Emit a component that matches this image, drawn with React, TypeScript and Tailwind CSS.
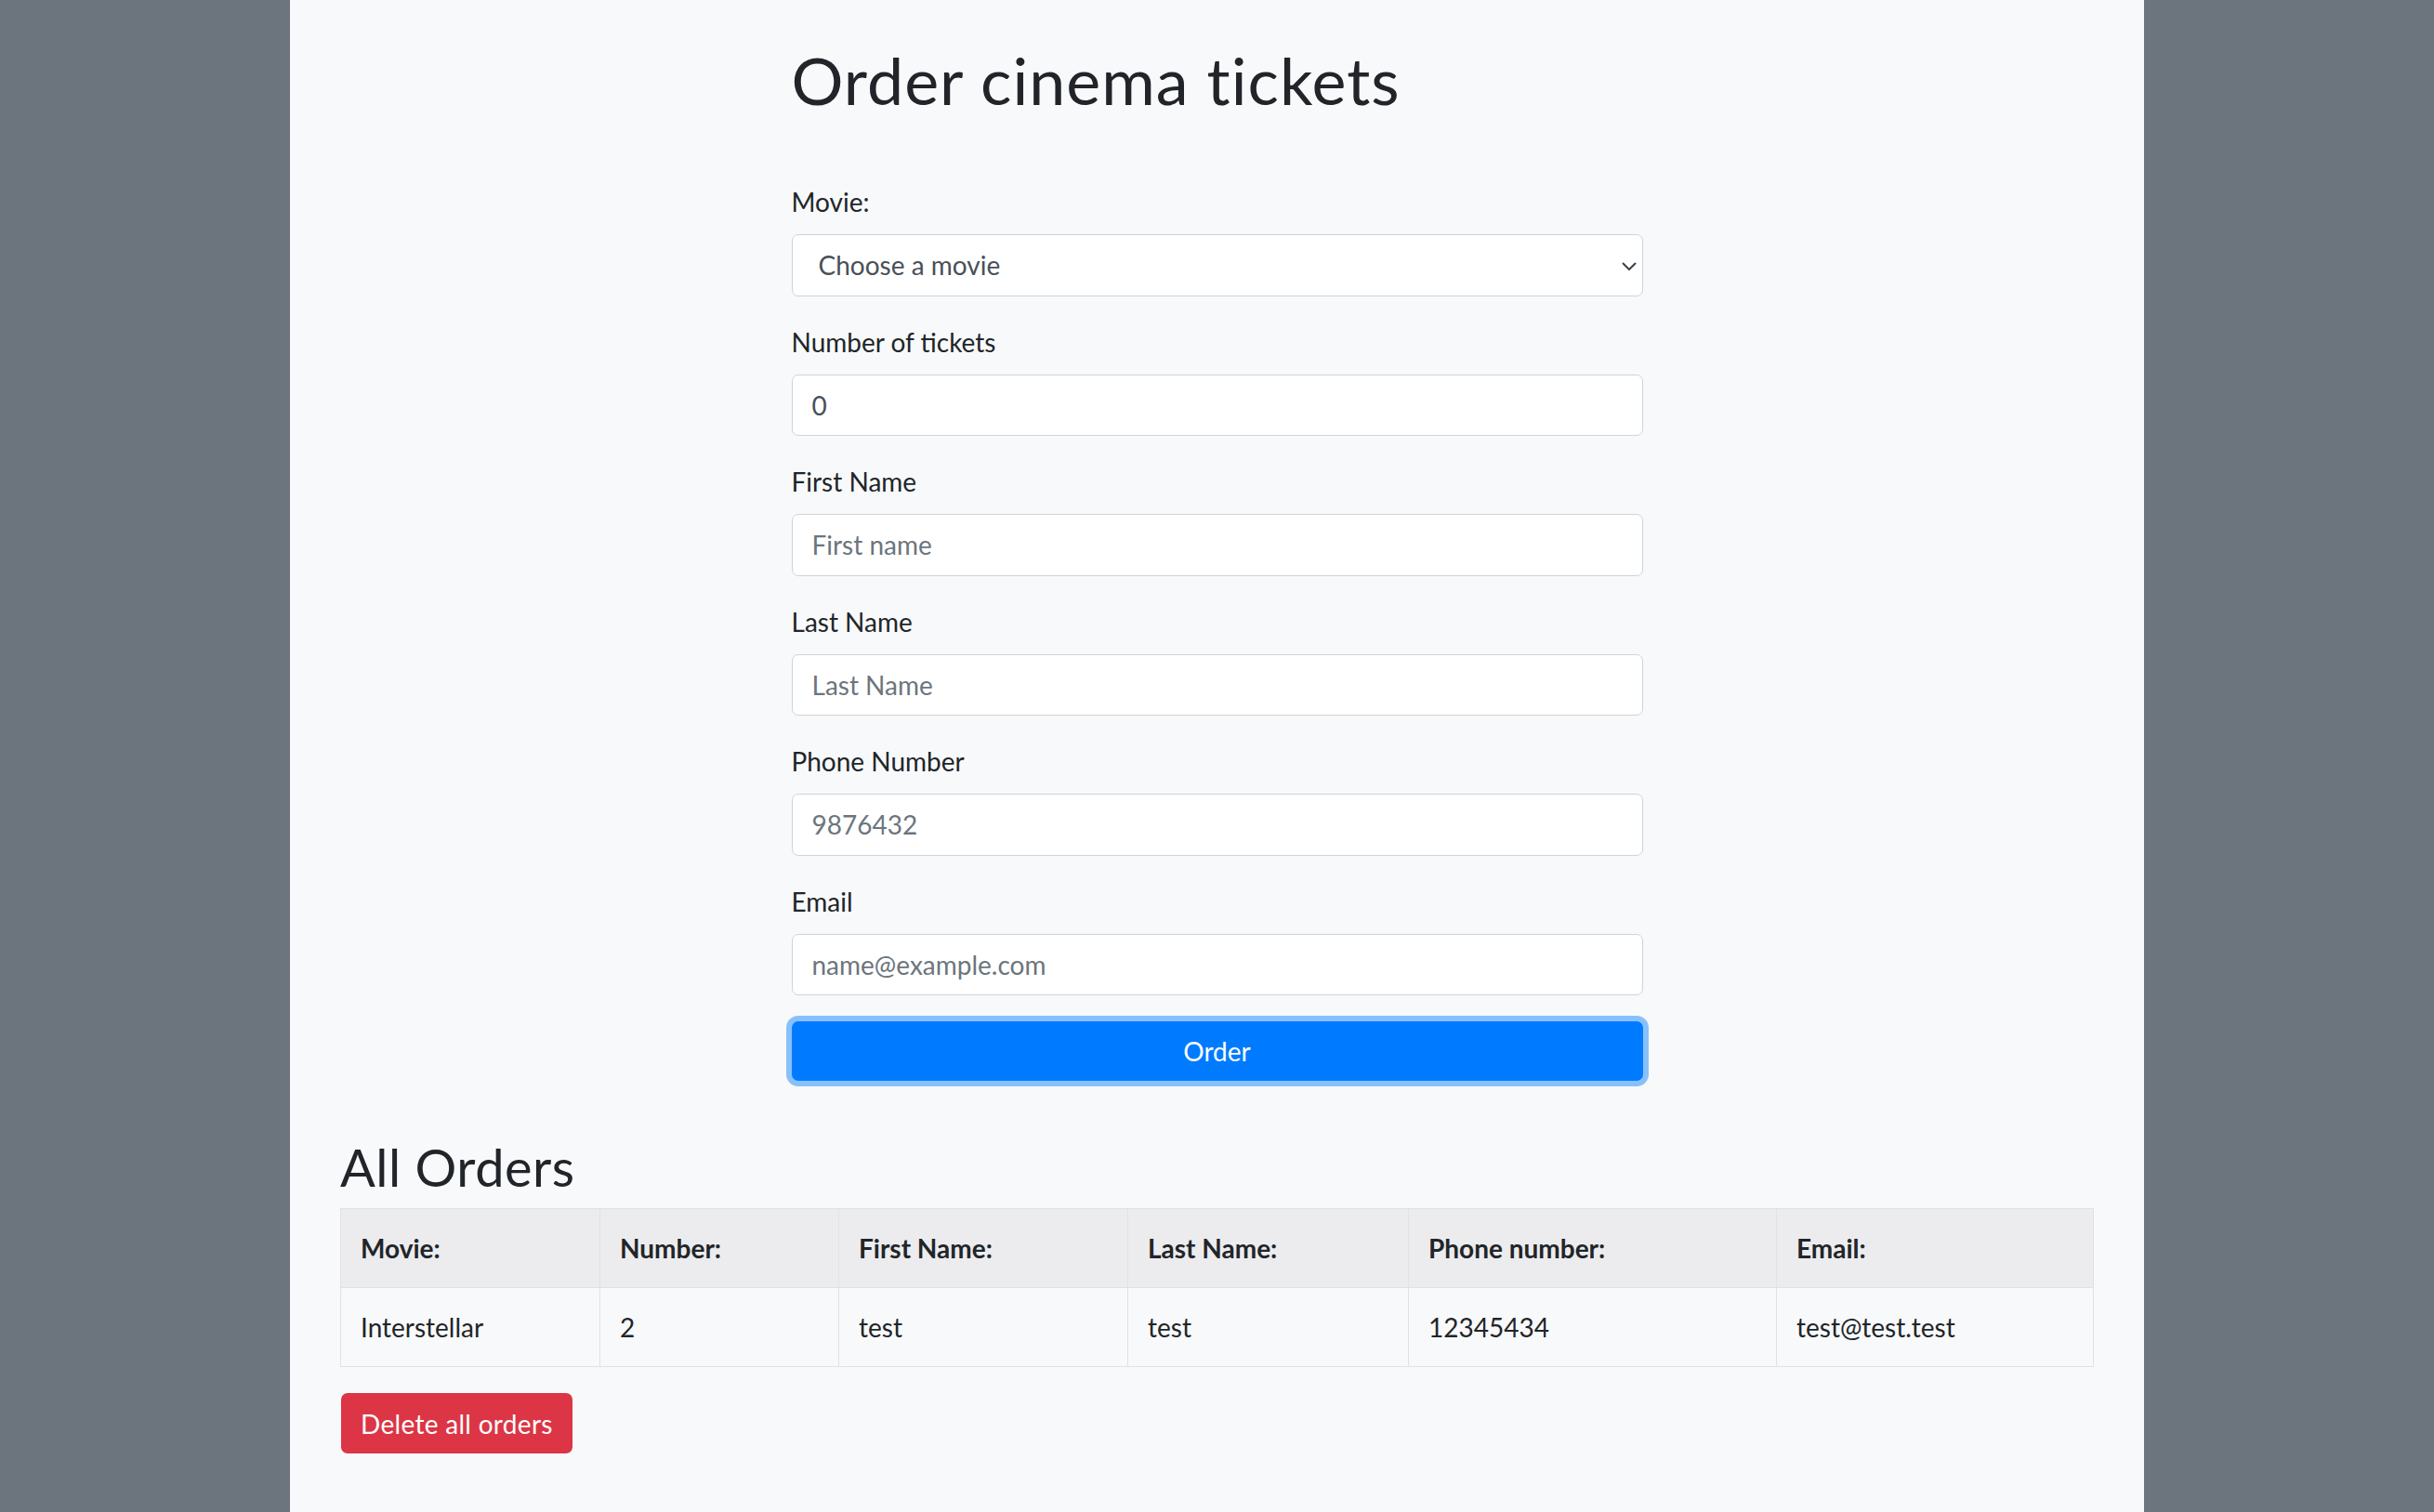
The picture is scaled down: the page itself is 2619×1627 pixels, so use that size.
import React from "react";

const fields = [
  { label: "Number of tickets", value: "0", placeholder: "" },
  { label: "First Name", value: "", placeholder: "First name" },
  { label: "Last Name", value: "", placeholder: "Last Name" },
  { label: "Phone Number", value: "", placeholder: "9876432" },
  { label: "Email", value: "", placeholder: "name@example.com" },
];

const columns = [
  { title: "Movie:", width: "w-[279px]" },
  { title: "Number:", width: "w-[257px]" },
  { title: "First Name:", width: "w-[311px]" },
  { title: "Last Name:", width: "w-[302px]" },
  { title: "Phone number:", width: "w-[396px]" },
  { title: "Email:", width: "w-[341px]" },
];

const orders = [["Interstellar", "2", "test", "test", "12345434", "test@test.test"]];

export default function App() {
  return (
    <div className="min-h-screen bg-[#6c757d] font-['Lato','Noto_Sans',sans-serif] text-[#212529]">
      <div className="mx-auto min-h-[1627px] w-[1995px] bg-[#f8f9fa] px-[54px] pb-10">
        <div className="mx-auto w-[916px]">
          <h1 className="pt-[44px] text-[70px] font-normal leading-[84px] tracking-[1px]">Order cinema tickets</h1>

          <form className="mt-[68px]" onSubmit={(e) => e.preventDefault()}>
            {/* Movie select */}
            <div className="mb-[28px]">
              <label className="mb-[14px] block text-[28px] leading-[42px]">Movie:</label>
              <div className="relative">
                <select
                  defaultValue=""
                  className="h-[66.5px] w-full appearance-none rounded-[7px] border border-[#ced4da] bg-white pl-[28px] text-[28px] text-[#495057] outline-none"
                >
                  <option value="">Choose a movie</option>
                  <option>Interstellar</option>
                </select>
                <svg
                  className="pointer-events-none absolute right-[7px] top-[30px]"
                  width="16"
                  height="9"
                  viewBox="0 0 16 9"
                  fill="none"
                >
                  <path d="M1 1l7 7 7-7" stroke="#3c4043" strokeWidth="2" />
                </svg>
              </div>
            </div>

            {fields.map((f) => (
              <div key={f.label} className="mb-[28px]">
                <label className="mb-[14px] block text-[28px] leading-[42px]">{f.label}</label>
                <input
                  type="text"
                  defaultValue={f.value}
                  placeholder={f.placeholder}
                  className="block h-[66.5px] w-full rounded-[7px] border border-[#ced4da] bg-white px-[21px] text-[28px] text-[#495057] outline-none placeholder:text-[#6c757d]"
                />
              </div>
            ))}

            <button
              type="submit"
              className="mt-[3px] block h-[64px] w-full rounded-[7px] bg-[#007bff] text-[28px] leading-[42px] text-white shadow-[0_0_0_6px_rgba(0,123,255,0.45)]"
            >
              Order
            </button>
          </form>
        </div>

        {/* Orders list */}
        <h2 className="mt-[56px] pt-[3px] text-[56px] font-normal leading-[67px] tracking-[0.5px]">All Orders</h2>
        <table className="mt-[11px] w-[1886px] table-fixed border-collapse text-[28px] leading-[42px]">
          <tbody>
            <tr className="bg-[#ececee]">
              {columns.map((c) => (
                <th
                  key={c.title}
                  className={`${c.width} border border-[#dee2e6] px-[21px] py-[21px] text-left font-bold`}
                >
                  {c.title}
                </th>
              ))}
            </tr>
            {orders.map((row, i) => (
              <tr key={i}>
                {row.map((cell, j) => (
                  <td key={j} className="border border-[#dee2e6] px-[21px] py-[21px]">
                    {cell}
                  </td>
                ))}
              </tr>
            ))}
          </tbody>
        </table>

        <button className="ml-px mt-[28px] h-[65px] rounded-[7px] bg-[#dc3545] px-[21px] text-[28px] leading-[42px] tracking-[0.3px] text-white">
          Delete all orders
        </button>
      </div>
    </div>
  );
}
